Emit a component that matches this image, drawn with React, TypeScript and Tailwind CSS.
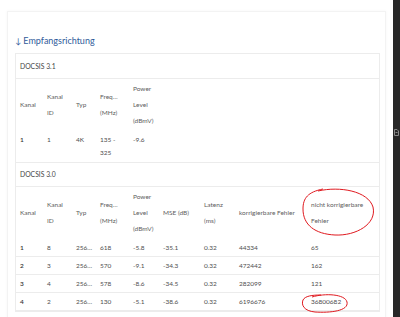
import React from 'react';

const font = { fontFamily: 'Lato, "Open Sans", sans-serif' };

type Row31 = { kanal: string; id: string; typ: string; freq: string; power: string };
type Row30 = Row31 & { mse: string; lat: string; korr: string; nicht: string };

const rows31: Row31[] = [{ kanal: '1', id: '1', typ: '4K', freq: '135 - 325', power: '-9.6' }];

const rows30: Row30[] = [
  { kanal: '1', id: '8', typ: '256…', freq: '618', power: '-5.8', mse: '-35.1', lat: '0.32', korr: '44334', nicht: '65' },
  { kanal: '2', id: '3', typ: '256…', freq: '570', power: '-9.1', mse: '-34.3', lat: '0.32', korr: '472442', nicht: '162' },
  { kanal: '3', id: '4', typ: '256…', freq: '578', power: '-8.6', mse: '-34.5', lat: '0.32', korr: '282099', nicht: '121' },
  { kanal: '4', id: '2', typ: '256…', freq: '130', power: '-5.1', mse: '-38.6', lat: '0.32', korr: '6196676', nicht: '36800682' },
];

const th = 'px-[4px] py-[2px] text-left align-middle font-normal text-[#5e5e5e] leading-[16px]';
const td = 'px-[4px] py-[2px] align-top text-[#4e4e4e] leading-[13px]';

function SectionLabel({ text, top }: { text: string; top?: boolean }) {
  return (
    <div className={`h-[25px] flex items-center px-[4px] text-[6.8px] text-[#454545] border-b border-[#ececec] ${top ? 'border-t' : ''}`}>
      {text}
    </div>
  );
}

function HeadCommon() {
  return (
    <>
      <th className={th}>Kanal</th>
      <th className={th}>Kanal<br />ID</th>
      <th className={th}>Typ</th>
      <th className={th}>Freq…<br />(MHz)</th>
      <th className={th}>Power<br />Level<br />(dBmV)</th>
    </>
  );
}

export default function App() {
  return (
    <div className="w-[400px] h-[317px] bg-white overflow-hidden flex relative" style={font}>
      <div className="flex-1 min-w-0">
        {/* Card */}
        <div className="ml-[7px] mt-[11px] w-[379px] h-[340px] bg-white border border-[#f3f3f3] shadow-[0_0_3px_rgba(0,0,0,0.04)] pt-[23px] pl-[7px]">
          <h2 className="text-[9px] leading-[12px] text-[#2f5b9a] font-normal">
            <span className="text-[8px]">↓</span> Empfangsrichtung
          </h2>

          <div className="mt-[6px] w-[365px] border border-[#ececec] text-[6.5px]">
            <SectionLabel text="DOCSIS 3.1" />
            <table className="w-full table-fixed border-collapse">
              <colgroup>
                <col className="w-[27px]" />
                <col className="w-[29px]" />
                <col className="w-[24px]" />
                <col className="w-[33px]" />
                <col />
              </colgroup>
              <thead>
                <tr><HeadCommon /></tr>
              </thead>
              <tbody>
                {rows31.map((r) => (
                  <tr key={r.kanal}>
                    <td className={`${td} font-semibold text-[#333]`}>{r.kanal}</td>
                    <td className={td}>{r.id}</td>
                    <td className={td}>{r.typ}</td>
                    <td className={`${td} pb-[3px]`}>{r.freq}</td>
                    <td className={td}>{r.power}</td>
                  </tr>
                ))}
              </tbody>
            </table>

            <SectionLabel text="DOCSIS 3.0" top />
            <table className="w-full table-fixed border-collapse">
              <colgroup>
                <col className="w-[27px]" />
                <col className="w-[29px]" />
                <col className="w-[24px]" />
                <col className="w-[33px]" />
                <col className="w-[30px]" />
                <col className="w-[41px]" />
                <col className="w-[35px]" />
                <col className="w-[72px]" />
                <col />
              </colgroup>
              <thead>
                <tr>
                  <HeadCommon />
                  <th className={th}>MSE (dB)</th>
                  <th className={th}>Latenz<br />(ms)</th>
                  <th className={th}>korrigierbare Fehler</th>
                  <th className={th}>nicht korrigierbare<br />Fehler</th>
                </tr>
              </thead>
              <tbody>
                {rows30.map((r, i) => (
                  <tr key={r.kanal} className={`border-b border-[#ececec] ${i > 0 ? 'border-t' : ''}`}>
                    <td className={`${td} font-semibold text-[#333]`}>{r.kanal}</td>
                    <td className={td}>{r.id}</td>
                    <td className={td}>{r.typ}</td>
                    <td className={td}>{r.freq}</td>
                    <td className={td}>{r.power}</td>
                    <td className={td}>{r.mse}</td>
                    <td className={td}>{r.lat}</td>
                    <td className={td}>{r.korr}</td>
                    <td className={td}>{r.nicht}</td>
                  </tr>
                ))}
              </tbody>
            </table>
          </div>
        </div>
      </div>

      {/* Dark side strip */}
      <div className="w-[7px] h-full bg-[#282828] flex flex-col items-center pt-[129px]">
        <svg width="5" height="7" viewBox="0 0 5 7" fill="none" stroke="#8a8a8a" strokeWidth="1">
          <path d="M0.5 0.5 H3 L4.5 2 V6.5 H0.5 Z" />
          <path d="M1.5 3.5 H3.5" />
        </svg>
      </div>

      {/* Red hand-drawn markings */}
      <svg className="absolute inset-0 pointer-events-none" width="400" height="317" fill="none" stroke="#e0191f" strokeWidth="1">
        <path d="M318 191 C340 186, 368 191, 373 207 C377 224, 356 236, 335 235 C315 234, 303 225, 303 209 C303 198, 308 192, 323 189" />
        <path d="M312 297 C325 293, 345 294, 347 302 C349 311, 330 313, 315 312 C304 311, 301 305, 303 300 C305 296, 312 295, 321 295" />
      </svg>
    </div>
  );
}
